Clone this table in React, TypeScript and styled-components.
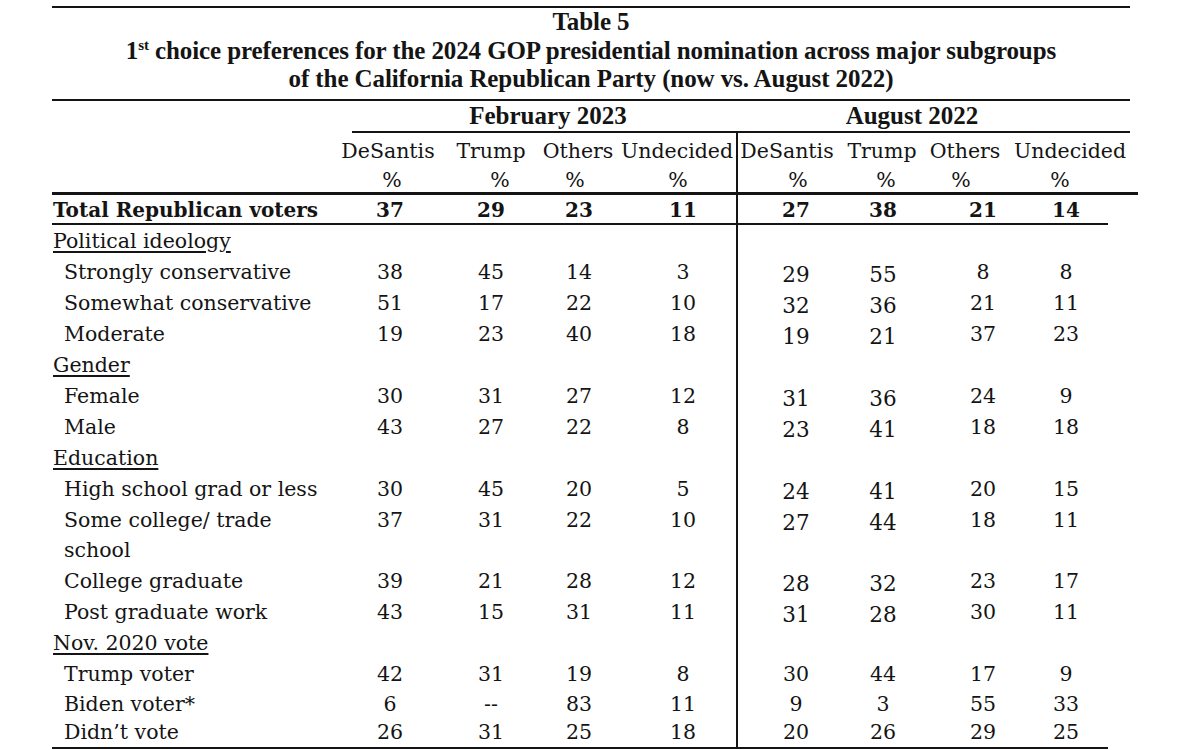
import React from "react";
import styled, { createGlobalStyle } from "styled-components";

const INK = "#141414";
const COLS = "288px 100px 102px 74px 120px 102px 90px 82px 120px";

const GlobalStyle = createGlobalStyle`
  html, body { margin: 0; padding: 0; background: #ffffff; }
  body { width: 1187px; height: 750px; overflow: hidden; }
`;

const Page = styled.div`
  width: 1187px;
  height: 750px;
  box-sizing: border-box;
  padding-left: 52px;
  background: #ffffff;
  color: ${INK};
  font-family: "DejaVu Serif", "Liberation Serif", serif;
`;

const Sheet = styled.div`
  width: 1078px;
  padding-top: 6px;
  display: flex;
  flex-direction: column;
`;

const Rule = styled.div<{ $w?: number; $t?: number }>`
  width: ${(p) => p.$w ?? 1078}px;
  height: ${(p) => p.$t ?? 2}px;
  background: ${INK};
  flex: none;
`;

const Title = styled.h1`
  margin: 0;
  padding: 0 0 5.5px;
  font: bold 25px/28.5px "Liberation Serif", "Times New Roman", serif;
  text-align: center;
  letter-spacing: -0.1px;
`;

const Sup = styled.sup`
  font-size: 15px;
  line-height: 0;
  vertical-align: 9px;
`;

const Row = styled.div<{ $h?: number }>`
  display: grid;
  grid-template-columns: ${COLS};
  align-items: start;
  flex: none;
  ${(p) => (p.$h ? `height: ${p.$h}px;` : "")}
`;

const GroupCell = styled.div<{ $span: string; $inset?: number; $dx?: number }>`
  grid-column: ${(p) => p.$span};
  margin-left: ${(p) => p.$inset ?? 0}px;
  height: 32px;
  box-sizing: border-box;
  border-bottom: 2px solid ${INK};
  font: bold 25px/30px "Liberation Serif", "Times New Roman", serif;
  text-align: center;
  padding-left: ${(p) => Math.max(0, (p.$dx ?? 0) * 2)}px;
  padding-right: ${(p) => Math.max(0, -(p.$dx ?? 0) * 2)}px;
`;

const Cell = styled.div<{
  $dx?: number;
  $sep?: boolean;
  $lh: number;
  $bold?: boolean;
  $big?: boolean;
}>`
  box-sizing: border-box;
  height: 100%;
  text-align: center;
  white-space: nowrap;
  font-size: ${(p) => (p.$big ? 21.5 : p.$bold ? 20 : 20.5)}px;
  font-weight: ${(p) => (p.$bold ? 700 : 400)};
  line-height: ${(p) => (p.$big ? p.$lh - 4 : p.$lh)}px;
  padding-top: ${(p) => (p.$big ? 4 : 0)}px;
  padding-left: ${(p) => Math.max(0, (p.$dx ?? 0) * 2)}px;
  padding-right: ${(p) => Math.max(0, -(p.$dx ?? 0) * 2)}px;
  border-left: ${(p) => (p.$sep ? `2px solid ${INK}` : "none")};
`;

const Label = styled.div<{ $kind: "total" | "cat" | "item"; $lh: number }>`
  white-space: nowrap;
  font-size: ${(p) => (p.$kind === "total" ? 20 : 20.5)}px;
  font-weight: ${(p) => (p.$kind === "total" ? 700 : 400)};
  line-height: ${(p) => p.$lh}px;
  padding-left: ${(p) => (p.$kind === "item" ? 12 : 1)}px;
  text-decoration: ${(p) => (p.$kind === "cat" ? "underline" : "none")};
  text-decoration-thickness: 1.5px;
  text-underline-offset: 3px;
`;

const NUM_DX = [0, 0, 0, 7, 8, 0, 14, -4];
const HEAD_DX = [-2, 0, -1, 1, -1, -1, -4, 0];
const PCT_DX = [2, 9, -4, 2, 10, 3, -8, -10];
const NAMES = ["DeSantis", "Trump", "Others", "Undecided", "DeSantis", "Trump", "Others", "Undecided"];

type Item =
  | { kind: "cat"; label: string; h?: number }
  | { kind: "item"; label: React.ReactNode; vals: string[]; big?: boolean; h?: number; labelLh?: number };

const DATA: Item[] = [
  { kind: "cat", label: "Political ideology" },
  { kind: "item", label: "Strongly conservative", vals: ["38", "45", "14", "3", "29", "55", "8", "8"], big: true },
  { kind: "item", label: "Somewhat conservative", vals: ["51", "17", "22", "10", "32", "36", "21", "11"], big: true },
  { kind: "item", label: "Moderate", vals: ["19", "23", "40", "18", "19", "21", "37", "23"], big: true },
  { kind: "cat", label: "Gender" },
  { kind: "item", label: "Female", vals: ["30", "31", "27", "12", "31", "36", "24", "9"], big: true },
  { kind: "item", label: "Male", vals: ["43", "27", "22", "8", "23", "41", "18", "18"], big: true },
  { kind: "cat", label: "Education" },
  { kind: "item", label: "High school grad or less", vals: ["30", "45", "20", "5", "24", "41", "20", "15"], big: true },
  {
    kind: "item",
    label: (
      <>
        Some college/ trade
        <br />
        school
      </>
    ),
    vals: ["37", "31", "22", "10", "27", "44", "18", "11"],
    big: true,
    h: 61,
    labelLh: 30,
  },
  { kind: "item", label: "College graduate", vals: ["39", "21", "28", "12", "28", "32", "23", "17"], big: true },
  { kind: "item", label: "Post graduate work", vals: ["43", "15", "31", "11", "31", "28", "30", "11"], big: true },
  { kind: "cat", label: "Nov. 2020 vote" },
  { kind: "item", label: "Trump voter", vals: ["42", "31", "19", "8", "30", "44", "17", "9"] },
  { kind: "item", label: "Biden voter*", vals: ["6", "--", "83", "11", "9", "3", "55", "33"], h: 28.5 },
  { kind: "item", label: "Didn’t vote", vals: ["26", "31", "25", "18", "20", "26", "29", "25"], h: 28.5 },
];

const LH = 31;

function Values({ vals, lh, bold, big }: { vals: string[]; lh: number; bold?: boolean; big?: boolean }) {
  return (
    <>
      {vals.map((v, i) => (
        <Cell
          key={i}
          $lh={lh}
          $dx={NUM_DX[i]}
          $sep={i === 4}
          $bold={bold}
          $big={big && (i === 4 || i === 5)}
        >
          {v}
        </Cell>
      ))}
    </>
  );
}

function EmptyCells({ lh }: { lh: number }) {
  return (
    <>
      {NAMES.map((_, i) => (
        <Cell key={i} $lh={lh} $sep={i === 4} />
      ))}
    </>
  );
}

export default function App() {
  return (
    <>
      <GlobalStyle />
      <Page>
        <Sheet>
          <Rule />
          <Title>
            Table 5
            <br />
            1<Sup>st</Sup> choice preferences for the 2024 GOP presidential nomination across major subgroups
            <br />
            of the California Republican Party (now vs. August 2022)
          </Title>
          <Rule />
          <Row>
            <div />
            <GroupCell $span="2 / 6" $inset={12} $dx={4}>
              February 2023
            </GroupCell>
            <GroupCell $span="6 / 10" $dx={-21}>
              August 2022
            </GroupCell>
          </Row>
          <Row $h={34}>
            <div />
            {NAMES.map((n, i) => (
              <Cell key={i} $lh={36} $dx={HEAD_DX[i]} $sep={i === 4}>
                {n}
              </Cell>
            ))}
          </Row>
          <Row $h={25}>
            <div />
            {NAMES.map((_, i) => (
              <Cell key={i} $lh={26} $dx={PCT_DX[i]} $sep={i === 4}>
                %
              </Cell>
            ))}
          </Row>
          <Rule $w={1086} $t={3} />
          <Row $h={28}>
            <Label $kind="total" $lh={30}>
              Total Republican voters
            </Label>
            <Values vals={["37", "29", "23", "11", "27", "38", "21", "14"]} lh={30} bold />
          </Row>
          <Rule $w={1056} />
          <Row $h={0.5}>
            <div />
            <EmptyCells lh={0.5} />
          </Row>
          {DATA.map((r, idx) => {
            const h = r.h ?? LH;
            return r.kind === "cat" ? (
              <Row key={idx} $h={h}>
                <Label $kind="cat" $lh={h}>
                  {r.label}
                </Label>
                <EmptyCells lh={h} />
              </Row>
            ) : (
              <Row key={idx} $h={h}>
                <Label $kind="item" $lh={r.labelLh ?? Math.min(h, LH)}>
                  {r.label}
                </Label>
                <Values vals={r.vals} lh={Math.min(h, LH)} big={r.big} />
              </Row>
            );
          })}
          <Rule $w={1056} />
        </Sheet>
      </Page>
    </>
  );
}
